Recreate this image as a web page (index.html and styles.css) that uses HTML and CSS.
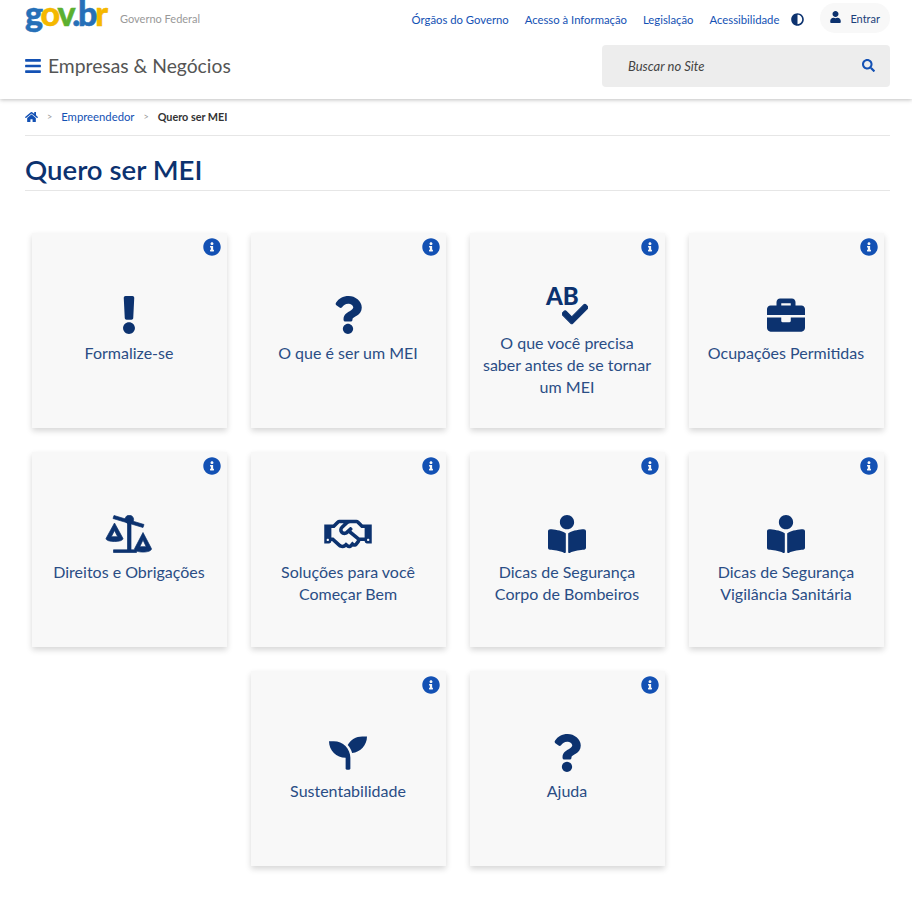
FILE: index.html
```html
<!DOCTYPE html>
<html lang="pt-BR">
<head>
    <meta charset="UTF-8">
    <title>Quero ser MEI</title>
    <link rel="stylesheet" href="styles.css">
</head>
<body>
    <svg class="icon-defs" xmlns="http://www.w3.org/2000/svg">
        <symbol id="i-info" viewBox="0 0 512 512"><path d="M256 8C119.043 8 8 119.083 8 256c0 136.997 111.043 248 248 248s248-111.003 248-248C504 119.083 392.957 8 256 8zm0 110c23.196 0 42 18.804 42 42s-18.804 42-42 42-42-18.804-42-42 18.804-42 42-42zm56 254c0 6.627-5.373 12-12 12h-88c-6.627 0-12-5.373-12-12v-24c0-6.627 5.373-12 12-12h12v-64h-12c-6.627 0-12-5.373-12-12v-24c0-6.627 5.373-12 12-12h64c6.627 0 12 5.373 12 12v100h12c6.627 0 12 5.373 12 12v24z"/></symbol>
        <symbol id="i-question" viewBox="0 0 384 512"><path d="M202.021 0C122.202 0 70.503 32.703 29.914 91.026c-7.363 10.58-5.093 25.086 5.178 32.874l43.138 32.709c10.373 7.865 25.132 6.026 33.253-4.148 25.049-31.381 43.63-49.449 82.757-49.449 30.764 0 68.816 19.799 68.816 49.631 0 22.552-18.617 34.134-48.993 51.164-35.423 19.86-82.299 44.576-82.299 106.405V320c0 13.255 10.745 24 24 24h72.471c13.255 0 24-10.745 24-24v-5.773c0-42.86 125.268-44.645 125.268-160.627C377.504 66.256 286.902 0 202.021 0zM192 373.459c-38.196 0-69.271 31.075-69.271 69.271 0 38.195 31.075 69.27 69.271 69.27s69.271-31.075 69.271-69.271-31.075-69.27-69.271-69.27z"/></symbol>
        <symbol id="i-book" viewBox="0 0 512 512"><path d="M352 96c0-53.02-42.98-96-96-96s-96 42.98-96 96 42.98 96 96 96 96-42.98 96-96zM233.59 241.1c-59.33-36.32-155.43-46.3-203.79-49.05C13.55 191.13 0 203.51 0 219.14v222.8c0 14.33 11.59 26.28 26.49 27.05 43.66 2.29 131.99 10.68 193.04 41.43 9.37 4.72 20.48-1.71 20.48-11.87V252.56c-.01-4.67-2.32-8.95-6.42-11.46zm248.61-49.05c-48.35 2.74-144.46 12.73-203.78 49.05-4.1 2.51-6.41 6.96-6.41 11.63v245.79c0 10.19 11.14 16.63 20.54 11.9 61.04-30.72 149.32-39.11 192.97-41.4 14.9-.78 26.49-12.73 26.49-27.06V219.14c-.01-15.63-13.56-28.01-29.81-27.09z"/></symbol>
    </svg>

    <header class="site-header">
        <div class="top-row">
            <div class="brand">
                <span class="logo"><span class="c-blue">g</span><span class="c-yellow">o</span><span class="c-green">v</span><span class="c-blue">.b</span><span class="c-yellow">r</span></span>
                <span class="brand-sub">Governo Federal</span>
            </div>
            <nav class="top-links">
                <a href="#">Órgãos do Governo</a>
                <a href="#">Acesso à Informação</a>
                <a href="#">Legislação</a>
                <a href="#">Acessibilidade</a>
                <svg class="contrast" viewBox="0 0 512 512"><path d="M8 256c0 136.966 111.033 248 248 248s248-111.034 248-248S392.966 8 256 8 8 119.033 8 256zm248 184V72c101.705 0 184 82.311 184 184 0 101.705-82.311 184-184 184z"/></svg>
                <a href="#" class="login">
                    <svg viewBox="0 0 448 512"><path d="M224 256c70.7 0 128-57.3 128-128S294.7 0 224 0 96 57.3 96 128s57.3 128 128 128zm89.6 32h-16.7c-22.2 10.2-46.9 16-72.9 16s-50.6-5.8-72.9-16h-16.7C60.2 288 0 348.2 0 422.4V464c0 26.5 21.5 48 48 48h352c26.5 0 48-21.5 48-48v-41.6c0-74.2-60.2-134.4-134.4-134.4z"/></svg>
                    Entrar
                </a>
            </nav>
        </div>
        <div class="main-row">
            <div class="site-name">
                <svg class="menu" viewBox="0 0 448 512"><path d="M16 132h416c8.837 0 16-7.163 16-16V76c0-8.837-7.163-16-16-16H16C7.163 60 0 67.163 0 76v40c0 8.837 7.163 16 16 16zm0 160h416c8.837 0 16-7.163 16-16v-40c0-8.837-7.163-16-16-16H16c-8.837 0-16 7.163-16 16v40c0 8.837 7.163 16 16 16zm0 160h416c8.837 0 16-7.163 16-16v-40c0-8.837-7.163-16-16-16H16c-8.837 0-16 7.163-16 16v40c0 8.837 7.163 16 16 16z"/></svg>
                <span>Empresas &amp; Negócios</span>
            </div>
            <div class="search">
                <span>Buscar no Site</span>
                <svg viewBox="0 0 512 512"><path d="M505 442.7L405.3 343c-4.5-4.5-10.6-7-17-7H372c27.6-35.3 44-79.7 44-128C416 93.1 322.9 0 208 0S0 93.1 0 208s93.1 208 208 208c48.3 0 92.7-16.4 128-44v16.3c0 6.4 2.5 12.5 7 17l99.7 99.7c9.4 9.4 24.6 9.4 33.9 0l28.3-28.3c9.4-9.4 9.4-24.6.1-34zM208 336c-70.7 0-128-57.2-128-128 0-70.7 57.2-128 128-128 70.7 0 128 57.2 128 128 0 70.7-57.2 128-128 128z"/></svg>
            </div>
        </div>
    </header>

    <main class="content">
        <div class="breadcrumb">
            <svg viewBox="0 0 576 512"><path d="M280.37 148.26L96 300.11V464a16 16 0 0 0 16 16l112.06-.29a16 16 0 0 0 15.92-16V368a16 16 0 0 1 16-16h64a16 16 0 0 1 16 16v95.64a16 16 0 0 0 16 16.05L464 480a16 16 0 0 0 16-16V300L295.67 148.26a12.19 12.19 0 0 0-15.3 0zM571.6 251.47L488 182.56V44.05a12 12 0 0 0-12-12h-56a12 12 0 0 0-12 12v72.61L318.47 43a48 48 0 0 0-61 0L4.34 251.47a12 12 0 0 0-1.6 16.9l25.5 31A12 12 0 0 0 45.15 301l235.22-193.74a12.19 12.19 0 0 1 15.3 0L530.9 301a12 12 0 0 0 16.9-1.6l25.5-31a12 12 0 0 0-1.7-16.93z"/></svg>
            <span class="sep">&gt;</span>
            <a href="#">Empreendedor</a>
            <span class="sep">&gt;</span>
            <strong>Quero ser MEI</strong>
        </div>

        <h1 class="page-title">Quero ser MEI</h1>

        <div class="cards">
            <a href="#" class="card">
                <svg class="info"><use href="#i-info"/></svg>
                <svg class="card-icon" viewBox="0 0 192 512"><path d="M176 432c0 44.112-35.888 80-80 80s-80-35.888-80-80 35.888-80 80-80 80 35.888 80 80zM25.26 25.199l13.6 272C39.499 309.972 50.041 320 62.83 320h66.34c12.789 0 23.331-10.028 23.97-22.801l13.6-272C167.425 11.49 156.496 0 142.77 0H49.23C35.504 0 24.575 11.49 25.26 25.199z"/></svg>
                <span class="card-label">Formalize-se</span>
            </a>
            <a href="#" class="card">
                <svg class="info"><use href="#i-info"/></svg>
                <svg class="card-icon" viewBox="0 0 384 512"><use href="#i-question"/></svg>
                <span class="card-label">O que é ser um MEI</span>
            </a>
            <a href="#" class="card card-long">
                <svg class="info"><use href="#i-info"/></svg>
                <span class="spell-icon">
                    <span class="spell-ab">AB</span>
                    <svg viewBox="0 0 512 512"><path d="M173.898 439.404l-166.4-166.4c-9.997-9.997-9.997-26.206 0-36.204l36.203-36.204c9.997-10 26.207-10 36.204 0L192 312.69 432.095 72.596c9.997-9.997 26.207-9.997 36.204 0l36.203 36.204c9.997 9.997 9.997 26.206 0 36.204l-294.4 294.401c-9.998 9.997-26.207 9.997-36.204-.001z"/></svg>
                </span>
                <span class="card-label">O que você precisa saber antes de se tornar um MEI</span>
            </a>
            <a href="#" class="card">
                <svg class="info"><use href="#i-info"/></svg>
                <svg class="card-icon" viewBox="0 0 512 512"><path d="M320 336c0 8.84-7.16 16-16 16h-96c-8.84 0-16-7.16-16-16v-48H0v144c0 25.6 22.4 48 48 48h416c25.6 0 48-22.4 48-48V288H320v48zm144-208h-80V80c0-25.6-22.4-48-48-48H176c-25.6 0-48 22.4-48 48v48H48c-25.6 0-48 22.4-48 48v80h512v-80c0-25.6-22.4-48-48-48zm-144 0H192V96h128v32z"/></svg>
                <span class="card-label">Ocupações Permitidas</span>
            </a>
            <a href="#" class="card">
                <svg class="info"><use href="#i-info"/></svg>
                <svg class="card-icon scale-icon" viewBox="0 0 48 38">
                    <circle cx="24.3" cy="4.5" r="4.3"/>
                    <path d="M9 .5l30 9-1 3L8 3.5z"/>
                    <rect x="22.5" y="5" width="3.5" height="31"/>
                    <rect x="8.5" y="34.8" width="23" height="2.7"/>
                    <path class="pan" d="M9.5 8L1 23.5c0 2 4 3 8.5 3s8.5-1 8.5-3zM9.5 15.5L6.3 21.7h6.4z"/>
                    <path class="pan" d="M38 17.5L29.5 33.8c0 2 4 3.3 8.5 3.3s8.5-1.3 8.500-3.300zM38 25L34.800 31.700h6.400z"/>
                </svg>
                <span class="card-label">Direitos e Obrigações</span>
            </a>
            <a href="#" class="card">
                <svg class="info"><use href="#i-info"/></svg>
                <svg class="card-icon" viewBox="0 0 640 512"><path d="M519.2 127.9l-47.6-47.6A56.252 56.252 0 0 0 432 64H205.2c-14.8 0-29.1 5.9-39.6 16.3L118 127.9H0v255.7h64c17.6 0 31.8-14.2 31.9-31.7h9.1l84.6 76.4c30.9 25.1 73.8 25.7 105.6 3.8 12.5 10.8 26 15.9 41.1 15.9 18.2 0 35.3-7.4 48.8-24 22.1 8.7 48.2 2.6 64-16.8l26.2-32.3c5.6-6.9 9.1-14.8 10.9-23h57.9c.1 17.5 14.4 31.7 31.9 31.7h64V127.9H519.2zM48 351.6c-8.8 0-16-7.2-16-16s7.2-16 16-16 16 7.2 16 16c0 8.9-7.2 16-16 16zm390-6.9l-26.1 32.2c-2.8 3.4-7.8 4-11.3 1.2l-23.9-19.4-30 36.5c-6 7.3-15 4.8-18 2.4l-36.8-31.5-15.6 19.2c-13.9 17.1-39.2 19.7-55.3 6.6l-97.3-88H96V175.8h41.9l61.7-61.6c2-.8 3.7-1.5 5.7-2.3H262l-38.7 35.5c-29.4 26.9-31.1 72.3-4.4 101.3 14.8 16.2 61.2 41.2 101.5 4.4l8.2-7.5 108.2 87.8c3.4 2.8 3.9 7.9 1.2 11.3zm106-40.8h-69.2c-2.3-2.8-4.9-5.4-7.7-7.7l-102.7-83.4 12.5-11.4c6.5-6 7-16.1 1-22.6L367 167.1c-6-6.5-16.1-6.9-22.6-1l-55.2 50.6c-9.5 8.7-25.7 9.4-34.6 0-9.3-9.9-8.5-25.1 1.2-33.9l65.6-60.1c7.4-6.8 17-10.5 27-10.5l83.7-.2c2.1 0 4.1.8 5.5 2.3l61.7 61.6H544v128zm48 47.7c-8.8 0-16-7.2-16-16s7.2-16 16-16 16 7.2 16 16c0 8.9-7.2 16-16 16z"/></svg>
                <span class="card-label">Soluções para você Começar Bem</span>
            </a>
            <a href="#" class="card">
                <svg class="info"><use href="#i-info"/></svg>
                <svg class="card-icon" viewBox="0 0 512 512"><use href="#i-book"/></svg>
                <span class="card-label">Dicas de Segurança Corpo de Bombeiros</span>
            </a>
            <a href="#" class="card">
                <svg class="info"><use href="#i-info"/></svg>
                <svg class="card-icon" viewBox="0 0 512 512"><use href="#i-book"/></svg>
                <span class="card-label">Dicas de Segurança Vigilância Sanitária</span>
            </a>
            <a href="#" class="card">
                <svg class="info"><use href="#i-info"/></svg>
                <svg class="card-icon" viewBox="0 0 512 512"><path d="M64 96H0c0 123.7 100.3 224 224 224v144c0 8.8 7.2 16 16 16h32c8.8 0 16-7.2 16-16V320C288 196.3 187.7 96 64 96zm384-64c-84.2 0-157.4 46.5-195.7 115.2 27.7 30.2 48.2 66.9 59 107.6C424 243.1 512 147.9 512 32h-64z"/></svg>
                <span class="card-label">Sustentabilidade</span>
            </a>
            <a href="#" class="card">
                <svg class="info"><use href="#i-info"/></svg>
                <svg class="card-icon" viewBox="0 0 384 512"><use href="#i-question"/></svg>
                <span class="card-label">Ajuda</span>
            </a>
        </div>
    </main>
</body>
</html>
```

FILE: styles.css
```css
:root {
    --blue: #1351b4;
    --navy: #0c326f;
    --label: #2a4d85;
    --line: #e6e6e6;
}
* {
    box-sizing: border-box;
}
body {
    margin: 0;
    background: #fff;
    color: #333;
    font-family: Lato, "Open Sans", Arial, sans-serif;
}
a {
    text-decoration: none;
}
.icon-defs {
    display: none;
}

/* header */
.site-header {
    height: 99px;
    padding: 3px 22px 0 25px;
    box-shadow: 0 1px 4px rgba(0,0,0,0.25);
}
.top-row {
    display: flex;
    justify-content: space-between;
    align-items: flex-start;
    height: 41px;
}
.brand {
    display: flex;
    align-items: flex-start;
    gap: 12px;
}
.logo {
    display: block;
    width: 83px;
    margin-top: -5px;
    font-size: 34px;
    line-height: 30px;
    font-weight: 900;
    letter-spacing: -2.2px;
    -webkit-text-stroke: 0.5px;
}
.c-blue { color: #2670b8; }
.c-yellow { color: #f5b800; }
.c-green { color: #5cb030; }
.brand-sub {
    font-size: 11px;
    color: #999;
    margin-top: 9px;
}
.top-links {
    display: flex;
    align-items: center;
    gap: 16px;
    height: 30px;
    font-size: 11.3px;
}
.top-links a {
    color: var(--blue);
    padding-top: 3px;
}
.contrast {
    width: 13px;
    height: 13px;
    fill: var(--navy);
    margin-left: -4px;
    margin-top: 2px;
}
.top-links .login {
    display: flex;
    align-items: center;
    gap: 9px;
    height: 30px;
    padding: 0 10px;
    border-radius: 15px;
    background: #f8f8f8;
    color: #1b3f7a;
    font-size: 11px;
}
.login svg {
    width: 11px;
    height: 12px;
    fill: var(--navy);
    margin-top: -2px;
}
.main-row {
    display: flex;
    justify-content: space-between;
    align-items: center;
    height: 43px;
}
.site-name {
    display: flex;
    align-items: center;
    gap: 7px;
    font-size: 19.3px;
    color: #555;
}
.menu {
    width: 16px;
    height: 18px;
    fill: var(--blue);
}
.search {
    display: flex;
    justify-content: space-between;
    align-items: center;
    width: 288px;
    height: 42px;
    padding: 0 15px 0 26px;
    background: #ededed;
    border-radius: 4px;
    font-size: 13px;
    font-style: italic;
    color: #444;
}
.search svg {
    width: 13px;
    height: 13px;
    fill: var(--blue);
}

/* page */
.content {
    padding: 0 22px 43px 25px;
}
.breadcrumb {
    display: flex;
    align-items: center;
    height: 37px;
    padding-bottom: 1px;
    border-bottom: 1px solid var(--line);
    font-size: 11.3px;
}
.breadcrumb svg {
    width: 13px;
    height: 12px;
    fill: var(--blue);
}
.breadcrumb a {
    color: var(--blue);
}
.breadcrumb strong {
    color: #333;
    font-size: 10.8px;
}
.sep {
    margin: 0 9px;
    font-size: 9px;
    color: #999;
}
.page-title {
    margin: 0;
    height: 55px;
    padding-top: 15px;
    border-bottom: 1px solid var(--line);
    font-size: 27.6px;
    line-height: 38px;
    font-weight: 600;
    color: var(--navy);
}
.cards {
    display: flex;
    flex-wrap: wrap;
    justify-content: center;
    gap: 24px;
    margin-top: 42px;
}
.card {
    position: relative;
    display: flex;
    flex-direction: column;
    align-items: center;
    width: 195px;
    height: 195px;
    padding: 63px 10px 0;
    background: #f8f8f8;
    box-shadow: 0 3px 6px rgba(0,0,0,0.16);
}
.card-long {
    padding-top: 53px;
}
.info {
    position: absolute;
    top: 5px;
    right: 6px;
    width: 18px;
    height: 18px;
    fill: var(--blue);
}
.card-icon {
    width: 48px;
    height: 38px;
    fill: var(--navy);
}
.scale-icon {
    stroke: var(--navy);
    stroke-width: 0.7;
    stroke-linejoin: round;
}
.pan {
    fill-rule: evenodd;
}
.spell-icon {
    position: relative;
    display: block;
    width: 42px;
    height: 38px;
    color: var(--navy);
}
.spell-ab {
    display: block;
    font-size: 24px;
    line-height: 20px;
    font-weight: 900;
}
.spell-icon svg {
    position: absolute;
    right: 0;
    bottom: -3px;
    width: 26px;
    height: 26px;
    fill: var(--navy);
    stroke: var(--navy);
    stroke-width: 20;
}
.card-label {
    margin-top: 8px;
    font-size: 16px;
    line-height: 22px;
    text-align: center;
    color: var(--label);
}
```
